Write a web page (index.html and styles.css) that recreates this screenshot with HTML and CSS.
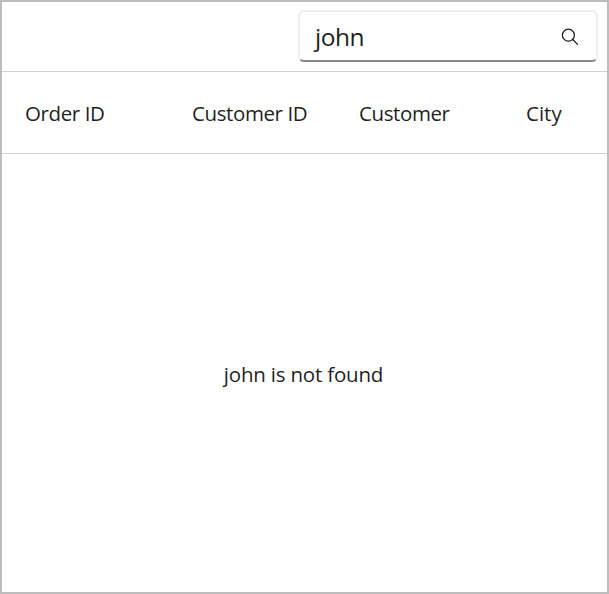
FILE: index.html
```html
<!DOCTYPE html>
<html lang="en">
<head>
<meta charset="utf-8">
<title>Orders</title>
<link rel="stylesheet" href="styles.css">
</head>
<body>
<main class="grid">
  <div class="toolbar">
    <div class="search">
      <span class="query">john</span>
      <svg class="icon" viewBox="0 0 18 18"><circle cx="7.4" cy="8.2" r="6"/><path d="M11.7 12.5l4.9 4.9"/></svg>
    </div>
  </div>
  <div class="header">
    <div class="cell">Order ID</div>
    <div class="cell">Customer ID</div>
    <div class="cell">Customer</div>
    <div class="cell">City</div>
  </div>
  <div class="empty">john is not found</div>
</main>
</body>
</html>
```
FILE: styles.css
```css
* { box-sizing: border-box; }
body { margin: 0; font-family: "Open Sans", "Noto Sans", sans-serif; color: #1f1f1f; background: #fff; }
.grid { width: 609px; height: 594px; border: 2px solid #bdbdbd; display: flex; flex-direction: column; overflow: hidden; }
.toolbar { height: 70px; border-bottom: 1px solid #d2d2d2; display: flex; justify-content: flex-end; padding: 8px 9px 0 0; }
.search { width: 300px; height: 52px; border: 2px solid #eeeeee; border-bottom: 2px solid #868686; border-radius: 6px; display: flex; align-items: center; justify-content: space-between; padding: 0 17px 0 15px; }
.query { font-size: 24.5px; line-height: 32px; letter-spacing: -0.5px; padding-top: 2px; }
.icon { width: 18px; height: 18px; fill: none; stroke: #1b1b1b; stroke-width: 1.2; stroke-linecap: round; overflow: visible; }
.header { height: 82px; border-bottom: 1px solid #d0d0d6; display: grid; grid-template-columns: repeat(4, 167px); align-items: center; }
.cell { padding: 0 0 0 23px; font-size: 20.5px; line-height: 28px; letter-spacing: -0.4px; white-space: nowrap; }
.cell:last-child { letter-spacing: 0; }
.empty { flex: 1; display: flex; align-items: center; justify-content: center; padding: 2px 2px 0 0; font-size: 20.5px; line-height: 28px; letter-spacing: -0.2px; }
```
